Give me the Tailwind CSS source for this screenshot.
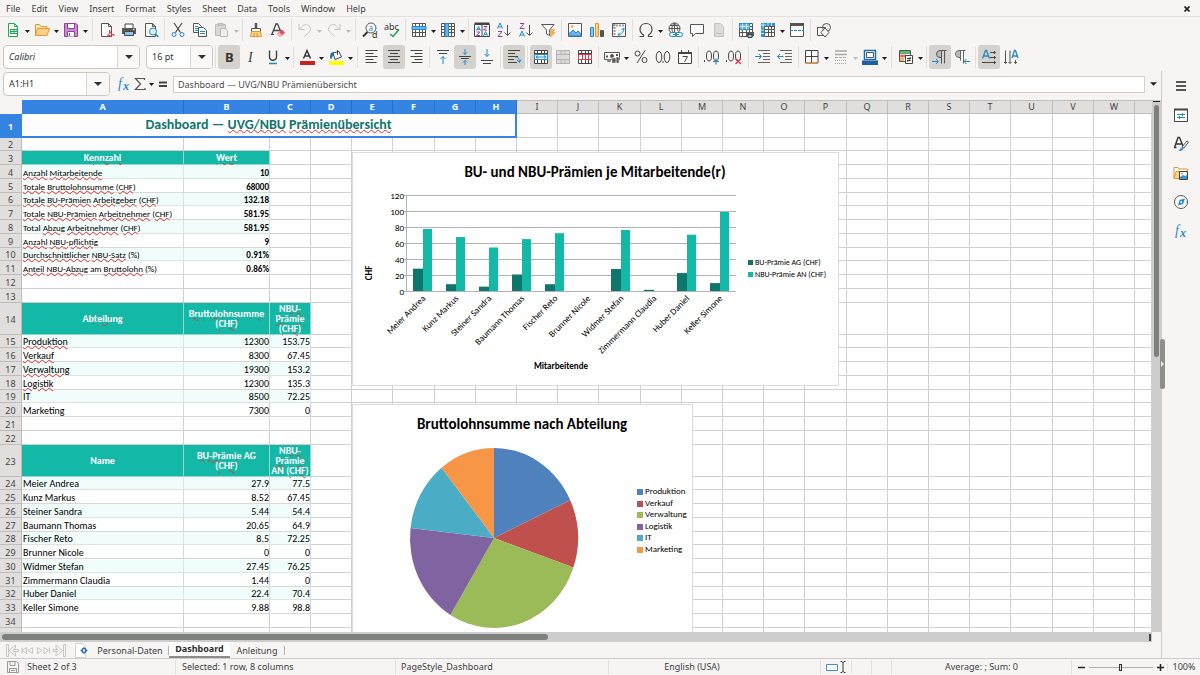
<!DOCTYPE html>
<html lang="en">
<head>
    <meta charset="UTF-8">
    <meta name="viewport" content="width=device-width, initial-scale=1.0">
    <title>Dashboard - Calc</title>
    <script src="https://cdn.jsdelivr.net/npm/@tailwindcss/browser@4"></script>
</head>
<body class="h-screen flex flex-col overflow-hidden bg-[#f6f5f4] font-['Noto_Sans',sans-serif] text-[9px] text-[#3d3d3d]">
    <!-- Menu bar -->
    <header class="flex items-center h-[17px] shrink-0 border-b border-[#e4e2e0] pt-px pl-1.5 pr-2">
        <nav id="menu" class="flex gap-[11px] flex-1"></nav>
        <button aria-label="Close document" class="p-0.5">
            <svg class="size-[6px]" viewBox="0 0 6 6" stroke="#222" stroke-width="1.6"><path d="M.5.5l5 5M5.5.5l-5 5"/></svg>
        </button>
    </header>

    <!-- Standard toolbar -->
    <div id="standardBar" class="flex items-center h-[26px] shrink-0 pl-0.5"></div>

    <!-- Formatting toolbar -->
    <div class="flex items-center h-[28px] shrink-0 pl-[3px]">
        <div class="flex w-[137px] h-[24px] rounded border border-[#cdc7c2] bg-white overflow-hidden">
            <input aria-label="Font name" value="Calibri" class="min-w-0 flex-1 pl-[5px] italic text-[#2e3436] outline-none">
            <button aria-label="Font list" class="w-[22px] border-l border-[#dcd8d5] bg-[#f9f8f7] flex items-center justify-center">
                <svg class="w-[8px] h-[4px]" viewBox="0 0 8 4"><path d="M0 0h8L4 4z" fill="#2e3436"/></svg>
            </button>
        </div>
        <div class="flex w-[67px] h-[24px] ml-1.5 rounded border border-[#cdc7c2] bg-white overflow-hidden">
            <input aria-label="Font size" value="16 pt" class="min-w-0 flex-1 pl-[5px] text-[#2e3436] outline-none">
            <button aria-label="Size list" class="w-[22px] border-l border-[#dcd8d5] bg-[#f9f8f7] flex items-center justify-center">
                <svg class="w-[8px] h-[4px]" viewBox="0 0 8 4"><path d="M0 0h8L4 4z" fill="#2e3436"/></svg>
            </button>
        </div>
        <div id="formatBar" class="flex items-center"></div>
    </div>

    <div class="flex flex-1 min-h-0">
        <main class="flex flex-col flex-1 min-w-0 border-r border-[#cfccca]">
            <!-- Formula bar -->
            <div class="flex items-center h-[29px] shrink-0 pl-[3px] pb-[3px]">
                <div class="flex w-[107px] h-[24px] rounded border border-[#cdc7c2] bg-white overflow-hidden">
                    <input aria-label="Name box" value="A1:H1" class="min-w-0 flex-1 pl-[5px] text-[#2e3436] outline-none">
                    <button aria-label="Named ranges" class="w-[23px] border-l border-[#dcd8d5] bg-[#f9f8f7] flex items-center justify-center">
                        <svg class="w-[8px] h-[4px]" viewBox="0 0 8 4"><path d="M0 0h8L4 4z" fill="#2e3436"/></svg>
                    </button>
                </div>
                <div id="formulaButtons" class="flex items-center pl-1.5 pr-0.5"></div>
                <input aria-label="Input line" value="Dashboard — UVG/NBU Prämienübersicht" class="flex-1 min-w-0 h-[17px] border border-[#d2cfcc] bg-white pl-1 text-[#4a4a4a] outline-none">
                <button aria-label="Expand formula bar" class="w-[16px] flex justify-center">
                    <svg class="w-[7px] h-[4px]" viewBox="0 0 8 4"><path d="M0 0h8L4 4z" fill="#222"/></svg>
                </button>
            </div>

            <!-- Sheet -->
            <div class="flex flex-1 min-h-0">
                <div class="relative flex-1 min-w-0 overflow-hidden bg-white">
                    <table class="w-full table-fixed border-separate border-spacing-0 font-[Carlito,Lato,sans-serif] text-black">
                        <colgroup id="cols"></colgroup>
                        <thead><tr id="colHeads"></tr></thead>
                        <tbody id="rows"></tbody>
                    </table>

                    <svg id="barChart" class="absolute left-[352px] top-[52px] w-[487px] h-[234px] bg-white border border-[#dcdcdc] font-[Carlito,Lato,sans-serif] text-[9px]" viewBox="353 153 485 232"></svg>
                    <svg id="pieChart" class="absolute left-[352px] top-[304px] w-[341px] h-[234px] bg-white border border-[#dcdcdc] font-[Carlito,Lato,sans-serif] text-[9px]" viewBox="353 405 339 232"></svg>
                </div>
                <div class="w-[9px] bg-[#cdcdcd] flex flex-col items-center">
                    <div class="w-[7px] h-px mt-px mb-[3px] bg-[#222]"></div>
                    <div class="w-[5px] h-[252px] rounded-full bg-[#7e807e]"></div>
                </div>
            </div>
            <div class="h-[10px] shrink-0 flex items-center justify-between mr-[9px] bg-[#cdcdcd] pl-0.5 pr-px">
                <div class="w-[546px] h-[6px] rounded-full bg-[#7e807e]"></div>
                <div class="w-[2px] h-[7px] bg-[#444]"></div>
            </div>

            <!-- Sheet tabs -->
            <div class="flex items-center h-[16px] shrink-0 pl-1.5">
                <svg class="w-[60px] h-[13px]" viewBox="0 0 60 13" fill="none" stroke="#c9c7c5">
                    <path d="M.5.5v12h2V.5zM3 6.5L9.500 1v3L7 6.500l2.500 2.500v3zM7.500 5.500h5v2h-5M20.500 3.500L16 6.500l4.500 3zM26.500 3.500L22 6.500l4.500 3zM16 3.500v6M31.500 3.500l4.500 3-4.500 3zM38 3.500l4.500 3-4.500 3zM43.500 3.500v6M57.500.5v12h2V.5zM56.500 6.500L50 1v3l2.500 2.500L50 9v3zM52 5.500h-5v2h5"/>
                </svg>
                <button aria-label="Add sheet" class="ml-2 w-[14px]">
                    <svg class="w-[14px] h-[15px]" viewBox="0 0 14 15" fill="none"><path d="M1.500.5h7l3 3v11h-10z" fill="#fff" stroke="#d5d3d1"/><circle cx="10" cy="7.500" r="2" fill="#fff" stroke="#2c6fb5" stroke-width="1.500"/><path d="M10 4v2M10 9v2M6.500 7.500h2M11.500 7.500h2" stroke="#2c6fb5"/></svg>
                </button>
                <button class="ml-1 w-[77px] border-r border-[#b5b3b1] leading-[9px] whitespace-nowrap">Personal-Daten</button>
                <button class="h-[16px] w-[61px] bg-white border-b-2 border-[#8b8c8b] font-bold text-[#2e2e2e]">Dashboard</button>
                <button class="w-[55px] border-r border-[#b5b3b1] leading-[9px]">Anleitung</button>
            </div>
        </main>

        <!-- Sidebar -->
        <aside class="relative w-[38px] shrink-0">
            <div id="sidebar" class="flex flex-col items-center"></div>
            <button aria-label="Hide sidebar" class="absolute -left-[2px] top-[268px] w-[5px] h-[50px] rounded-sm bg-[#8e8e8d] flex items-center justify-center">
                <svg class="w-[3px] h-[6px]" viewBox="0 0 3 6"><path d="M0 0l3 3-3 3z" fill="#eee"/></svg>
            </button>
        </aside>
    </div>

    <!-- Status bar -->
    <footer class="flex items-center h-[17px] shrink-0 border-t border-[#cfccca]">
        <div class="w-[26px] flex justify-center border-r border-[#e2e0de]">
            <svg class="size-[12px]" viewBox="0 0 12 12" fill="none" stroke="#9a9896"><path d="M.5.5h9l2 2v9H.5zM3 .5v4h5v-4M2.500 11V7.500h7V11M4 9.500h4"/></svg>
        </div>
        <div class="w-[150px] border-r border-[#e2e0de] pl-px leading-[14px]">Sheet 2 of 3</div>
        <div class="w-[220px] border-r border-[#e2e0de] pl-1.5 leading-[14px]">Selected: 1 row, 8 columns</div>
        <div class="flex-1 border-r border-[#e2e0de] pl-[5px] leading-[14px]">PageStyle_Dashboard</div>
        <div class="w-[212px] border-r border-[#e2e0de] pr-[45px] text-center leading-[14px]">English (USA)</div>
        <div class="w-[31px] flex justify-center border-r border-[#e2e0de]">
            <svg class="w-[20px] h-[12px]" viewBox="0 0 20 12" fill="none"><path d="M.5 3.500h11v6H.5z" fill="#fff" stroke="#3f92cf"/><path d="M14.500.5h1.500l1 1 1-1h1.500M17 1v10M14.500 11.500h1.500l1-1 1 1h1.500" stroke="#333"/></svg>
        </div>
        <div class="w-[20px] h-[14px] border-r border-[#e2e0de]"></div>
        <div class="w-[20px] h-[14px] border-r border-[#e2e0de]"></div>
        <div class="w-[180px] border-r border-[#e2e0de] text-center leading-[14px]">Average: ; Sum: 0</div>
        <div class="flex items-center gap-1 w-[96px] pl-1.5 border-r border-[#e2e0de]">
            <button aria-label="Zoom out"><svg class="size-[7px]" viewBox="0 0 7 7"><path d="M0 3.500h7" stroke="#222" stroke-width="1.500"/></svg></button>
            <input type="range" min="0" max="100" value="49" aria-label="Zoom" class="w-[64px] h-[7px] appearance-none bg-linear-to-b from-transparent from-45% via-[#8b8c8b] via-45% to-transparent to-60% [&::-webkit-slider-thumb]:appearance-none [&::-webkit-slider-thumb]:w-[3px] [&::-webkit-slider-thumb]:h-[7px] [&::-webkit-slider-thumb]:border [&::-webkit-slider-thumb]:border-[#333] [&::-webkit-slider-thumb]:bg-[#ddd]">
            <button aria-label="Zoom in"><svg class="size-[7px]" viewBox="0 0 7 7"><path d="M0 3.500h7M3.500 0v7" stroke="#222" stroke-width="1.500"/></svg></button>
        </div>
        <div class="w-[32px] text-center leading-[14px]">100%</div>
    </footer>

    <script>
        const grid = 'M1.500 1.500h13v13h-13zM1.500 4.500h13M1.500 7.500h13M1.500 10.500h13M4.500 1.500v13M8.500 1.500v13M11.500 1.500v13';

        // Icon bodies, drawn in a 16x16 box with no fill by default
        const icons = {
            new: '<path d="M3.500 1.500h6l3 3v10h-9z" fill="#fff" stroke="#18ab50"/><path d="M9.500 1.500v3h3" stroke="#18ab50"/><path d="M5 7h8v5H5z" fill="#18ab50"/><path d="M6 8.500h2.500M9.500 8.500H12M6 10.500h2.500M9.500 10.500H12" stroke="#fff"/>',
            open: '<path d="M1.500 13.500v-11h4l1.500 2h6v2" fill="#fbe3b8" stroke="#e8952a"/><path d="M1.500 13.500l2-7h12l-2.500 7z" fill="#fcd28c" stroke="#e8952a"/>',
            save: '<path d="M1.500 1.500h11.500l1.500 1.500v11.500h-13z" fill="#c78bd0" stroke="#93409f"/><path d="M4.500 1.500h7v5h-7zM4.500 14.500v-5h7v5" fill="#fff" stroke="#93409f"/><path d="M6.500 11v3" stroke="#93409f"/>',
            pdf: '<path d="M2.500 1.500h7l3 3v10h-10z" fill="#fff" stroke="#555"/><path d="M9.500 1.500v3h3" stroke="#555"/><path d="M7 15c3-2 4-4 3.500-7 .5 3 2 4.500 5 5-3-.5-6 .5-8.500 2z" stroke="#d93a4a"/>',
            print: '<path d="M4 6V2h8v4" fill="#fff" stroke="#444"/><path d="M1 6h14v6H1z" fill="#57585a"/><path d="M3.500 9.500h9v4h-9z" fill="#8cc4ea" stroke="#444"/><path d="M12 7.500h1.500" stroke="#fff"/>',
            preview: '<path d="M2.500 1.500h7l3 3v10h-10z" fill="#fff" stroke="#555"/><path d="M9.500 1.500v3h3" stroke="#555"/><circle cx="10" cy="9.500" r="3.500" fill="#d9edf9" stroke="#1e8bcd"/><path d="M12.500 12l3 3" stroke="#1e8bcd" stroke-width="1.500"/>',
            cut: '<path d="M4 1l6.500 9.500M12 1L5.500 10.500" stroke="#444" stroke-width="1.200"/><circle cx="4" cy="12.500" r="2" stroke="#1e8bcd"/><circle cx="12" cy="12.500" r="2" stroke="#1e8bcd"/>',
            copy: '<path d="M1.500 1.500h5l3 3v6h-8z" fill="#fff" stroke="#555"/><path d="M3 4.500h3M3 6.500h4M3 8.500h3" stroke="#1e8bcd"/><path d="M6.500 5.500h5l3 3v6h-8z" fill="#fff" stroke="#555"/><path d="M8 9.500h5M8 11.500h5" stroke="#1e8bcd"/>',
            paste: '<path d="M1.500 2.500h10v11h-10z" fill="#dad8d6" stroke="#bbb9b7"/><path d="M4 1.500h5v2H4z" fill="#ccc" stroke="#bbb9b7"/><path d="M6.500 6.500h5l2 2v6h-7z" fill="#eee" stroke="#bbb9b7"/>',
            clone: '<path d="M8 1v5" stroke="#555" stroke-width="2.500"/><path d="M3.500 6.500h9v3h-9z" fill="#fff" stroke="#555"/><path d="M3.500 9.500h9l1 5h-11z" fill="#fcd28c" stroke="#e8952a"/><path d="M6 11v3M9 11v3" stroke="#e8952a"/>',
            clear: '<path d="M2 12L6 2h1.500L11 10M3.500 8.500h6" stroke="#444" stroke-width="1.300"/><path d="M1 12.500h3" stroke="#444"/><path d="M7 11.500l5-4 3 3-4 4H9z" fill="#e5525d"/><path d="M7 11.500l2-1.500 3 3-1 1.500H9z" fill="#f7b5b9"/>',
            undo: '<path d="M2 2v5.500h5.500M2 7.500l4-4c3-2 7-.5 7.500 3.500 0 2-1.500 3.500-6 7.500" stroke="#c4c2c0"/>',
            redo: '<path d="M14 2v5.500H8.500M14 7.500l-4-4c-3-2-7-.5-7.500 3.500 0 2 1.500 3.500 6 7.500" stroke="#c4c2c0"/>',
            find: '<circle cx="9" cy="6" r="5" fill="#fff" stroke="#555"/><path d="M5.500 10L1 14.500" stroke="#333" stroke-width="2"/><text x="6.500" y="8.500" font-size="8" fill="#1e8bcd">a</text><text x="10" y="15.500" font-size="9" fill="#333">d</text>',
            spell: '<text x="0" y="7.500" font-size="9" fill="#333">abc</text><path d="M6 12l3 2.500L15 7.500" stroke="#18ab50" stroke-width="1.500"/>',
            row: `<path d="${grid}" fill="#fff" stroke="#555"/><path d="M1 4.500h14v3H1z" fill="#6ab4e8" stroke="#1e8bcd"/>`,
            column: `<path d="${grid}" fill="#fff" stroke="#555"/><path d="M5 1.500h3.500v13H5z" fill="#6ab4e8" stroke="#1e8bcd"/>`,
            sort: '<path d="M.5 2.500h15v12h-15z" fill="#fff" stroke="#444"/><path d="M.5 1.500h15" stroke="#444" stroke-width="2"/><path d="M8 2v13" stroke="#444"/><path d="M2.500 8.500l2-4 2 4M3 7.500h3M9.500 13.500l2-4 2 4M10.500 12.500h2.500" stroke="#1e8bcd"/><path d="M2.500 10h3.500L2.500 13.500H6M9.500 4.500H13L9.500 8H13" stroke="#a33ea1"/>',
            asc: '<path d="M1.500 6.500l2.500-5.500 2.500 5.500M2.500 5h3" stroke="#1e8bcd"/><path d="M2 9.500h4l-4 5h4.500" stroke="#a33ea1"/><path d="M11.500 3v10M8.500 10.500l3 3 3-3" stroke="#555"/>',
            desc: '<path d="M1.500 14.500L4 9l2.500 5.500M2.500 13h3" stroke="#1e8bcd"/><path d="M2 1.500h4l-4 5h4.500" stroke="#a33ea1"/><path d="M11.500 3v10M8.500 10.500l3 3 3-3" stroke="#555"/>',
            filter: '<path d="M1.500 2.500h12.500L9.500 8v5.500l-3-1.500V8z" fill="#fff" stroke="#555"/><path d="M11 7.500h3.500l-1.500 3h2L10 15.500l1-4H9.500z" fill="#f7b25a" stroke="#e8952a" stroke-width=".6"/>',
            image: '<path d="M1.500 1.500h13v13h-13z" fill="#fff" stroke="#555"/><path d="M2 12l4-4 3 3 2-2 3 3v2H2z" fill="#6ab4e8" stroke="#1e8bcd"/><circle cx="5" cy="4.500" r="1.500" fill="#f7b25a"/>',
            chart: '<path d="M1.500 5.500h3v9h-3z" fill="#8cc4ea" stroke="#1e8bcd"/><path d="M6.500 1.500h3v13h-3z" fill="#fcd28c" stroke="#e8952a"/><path d="M11.500 8.500h3v6h-3z" fill="#555" stroke="#555"/>',
            pivot: '<path d="M1.500 1.500h13v13h-13z" fill="#fff" stroke="#555"/><path d="M2 3.500h12M3.500 2v12" stroke="#999" stroke-width="2" stroke-dasharray="2 1"/><path d="M7 12.500c4 0 5.500-2 5.500-6M10.500 8l2-2 2 2M9 10.500l-2 2 2 2" stroke="#1e8bcd"/>',
            omega: '<path d="M1.500 14.500h4v-1.500C3 11.500 2 9.500 2 7.500 2 4 4.500 1.500 8 1.500s6 2.500 6 6c0 2-1 4-3.500 5.500v1.500h4" stroke="#444" stroke-width="1.200"/>',
            link: '<circle cx="7.500" cy="6.500" r="5.500" stroke="#555"/><path d="M2 6.500h11M3 3.500h9M7.500 1v11M7.500 1C4 4 4 9 7.500 12M7.500 1c3.500 3 3.500 6 3 8" stroke="#555"/><path d="M4.500 10.500h4v4h-4a2 2 0 010-4zM9.500 10.500h4a2 2 0 010 4h-4z" fill="#f6f5f4" stroke="#1e8bcd"/><path d="M6 12.500h6" stroke="#1e8bcd"/>',
            comment: '<path d="M1.500 2.500h13v9h-8l-3 3v-3h-2z" fill="#fff" stroke="#555"/>',
            header: '<path d="M3.500 1.500h6l3 3v10h-9z" fill="#dddbd9" stroke="#c4c2c0"/><path d="M5 11.500h6" stroke="#c4c2c0"/>',
            printArea: `<path d="${grid}" fill="#fff" stroke="#555"/><path d="M1.500 1.500h10v6h-10z" fill="#6ab4e8" stroke="#1e8bcd"/><path d="M1.500 4.500h10M4.500 1.500v6M8.500 1.500v6" stroke="#cfe6f6"/><path d="M8 10h8v4H8z" fill="#57585a"/><path d="M10 12.500h4v3h-4z" fill="#8cc4ea" stroke="#444"/>`,
            freeze: `<path d="${grid}" fill="#fff" stroke="#555"/><path d="M1 1h14v3H4.500v11H1z" fill="#2f93d6"/><path d="M8 0v4M11.500 0v4M1 8h3M1 11.500h3M3 0v6M0 3h6" stroke="#cfe6f6"/>`,
            split: '<path d="M1.500 1.500h13v13h-13z" fill="#fff" stroke="#555"/><path d="M1 2.500h14" stroke="#555" stroke-width="3"/><path d="M1 8.500h14" stroke="#1e8bcd" stroke-dasharray="3 1"/>',
            shapes: '<path d="M1.500 5.500h8v8h-8z" stroke="#555"/><circle cx="10.500" cy="5.500" r="4" stroke="#555"/><path d="M9 6l4 4.500-4 4.500-4-4.500z" fill="#f6f5f4" stroke="#555"/>',

            bold: '<text x="4" y="13" font-size="13" font-weight="700" fill="#333">B</text>',
            italic: '<text x="5" y="13" font-size="14" font-style="italic" font-family="Liberation Serif" fill="#444">I</text>',
            underline: '<path d="M4.500 1.500v6c0 5 7 5 7 0v-6" stroke="#444" stroke-width="1.400"/><path d="M4 14.500h8" stroke="#1e8bcd" stroke-width="1.500"/>',
            fontColor: '<path d="M4.500 9.500L8 1.500l3.500 8M6 7h4" stroke="#333" stroke-width="1.500"/><path d="M1 12h15v4H1z" fill="#c9211e"/>',
            fill: '<path d="M5 4l6-1.500L13.500 8 7 10.500z" fill="#fff" stroke="#444"/><path d="M9.500 1v5" stroke="#444"/><path d="M2 9c0-4 1-6 4-6v3C4.500 7 4 8 3.500 10z" fill="#1e6db0"/><path d="M1 12h15v4H1z" fill="#ff0"/>',
            left: '<path d="M1.500 1.500h12M1.500 4.500h8M1.500 7.500h12M1.500 10.500h8M1.500 13.500h11" stroke="#444"/>',
            center: '<path d="M2 1.500h12M4 4.500h8M2 7.500h12M4 10.500h8M2 13.500h12" stroke="#444"/>',
            right: '<path d="M2.500 1.500h12M6.500 4.500h8M2.500 7.500h12M6.500 10.500h8M3.500 13.500h11" stroke="#444"/>',
            top: '<path d="M2 1.500h12M4 4.500h8" stroke="#444"/><path d="M8 15V7.500M5.500 10L8 7.500l2.500 2.500" stroke="#1e8bcd"/>',
            middle: '<path d="M2 7.500h12M4 9.500h8" stroke="#444"/><path d="M8 0v5.500M6 3.500l2 2 2-2M8 16v-4.500M6 13.500l2-2 2 2" stroke="#1e8bcd"/>',
            bottom: '<path d="M2 11.500h12M4 14.500h8" stroke="#444"/><path d="M8 0v7.500M5.500 5L8 7.500 10.500 5" stroke="#1e8bcd"/>',
            wrap: '<path d="M2 1.500h12M2 4.500h7M2 7.500h10M2 10.500h6M2 13.500h9" stroke="#444"/><path d="M9 8c3 0 4 1 4.500 5M11 11l2.500 2.500L15 10.500" stroke="#1e8bcd"/>',
            merge: `<path d="${grid}" fill="#fff" stroke="#444"/><path d="M1.500 5.500h13v5h-13z" fill="#fff" stroke="#1e8bcd"/><path d="M3 8h10M5 6.500L3 8l2 1.500M11 6.500L13 8l-2 1.500" stroke="#1e8bcd"/>`,
            mergeCells: '<path d="M1.500 1.500h13v13h-13zM1.500 5.500h13M1.500 10.500h13M6 1.500v4M10 1.500v4M6 10.500v4M10 10.500v4" fill="#dddbd9" stroke="#b5b3b1"/>',
            unmerge: `<path d="${grid}" fill="#fff" stroke="#444"/><path d="M1.500 5.500h13v5h-13zM5.500 5.500v5M8.500 5.500v5M11.500 5.500v5" fill="#fff" stroke="#d93a4a"/>`,
            currency: '<path d="M.5 3.500h15v7h-15z" fill="#fff" stroke="#555"/><circle cx="8" cy="7" r="2" fill="#555"/><path d="M2 7.500h2M12 6h2" stroke="#555" stroke-width="2"/><path d="M3 13h4v-2H3zM8 14h4V9H8zM12 14h3V8h-3z" fill="#555" stroke="#f6f5f4" stroke-width=".5"/>',
            percent: '<circle cx="4.500" cy="4.500" r="2.500" stroke="#444"/><circle cx="11.500" cy="11" r="2.500" stroke="#444"/><path d="M12 1.500L4 14" stroke="#444"/>',
            number: '<ellipse cx="4" cy="8" rx="2.800" ry="5.500" stroke="#444"/><ellipse cx="12" cy="8" rx="2.800" ry="5.500" stroke="#444"/><path d="M8 12v2" stroke="#444"/>',
            date: '<path d="M1.500 3.500h13v11h-13z" fill="#fff" stroke="#444"/><path d="M1 4h14" stroke="#444" stroke-width="2"/><path d="M4.500 1v3M11.500 1v3M5.500 7.500h5L7.500 13" stroke="#444"/>',
            addDecimal: '<ellipse cx="5" cy="7" rx="2.500" ry="5" stroke="#444"/><ellipse cx="12" cy="7" rx="2.500" ry="5" stroke="#444"/><path d="M.5 11v2" stroke="#444"/><path d="M12 9.500v6M9 12.500h6" stroke="#1e8bcd" stroke-width="1.200"/>',
            delDecimal: '<ellipse cx="5" cy="7" rx="2.500" ry="5" stroke="#444"/><ellipse cx="12" cy="7" rx="2.500" ry="5" stroke="#444"/><path d="M.5 11v2" stroke="#444"/><path d="M9.500 9.500l5.500 5.500M15 9.500L9.500 15" stroke="#e5323e" stroke-width="1.200"/>',
            indent: '<path d="M3 1.500h12M8 4.500h7M8 7.500h7M8 10.500h7M3 13.500h12" stroke="#666"/><path d="M0 7.500h6M4 5l2.500 2.500L4 10" stroke="#1e8bcd"/>',
            outdent: '<path d="M3 1.500h12M8 4.500h7M8 7.500h7M8 10.500h7M3 13.500h12" stroke="#666"/><path d="M.5 7.500h6M3 5L.5 7.500 3 10" stroke="#1e8bcd"/>',
            borders: '<path d="M1.500 1.500h12.500v12.500H1.500zM7.500 1.500v12.500M1.500 7.500H14" fill="#fff" stroke="#444"/><path d="M1.500 14h12.500" stroke="#e8952a"/>',
            borderStyle: '<path d="M2 2h12M2 5.500h12" stroke="#aaa8a6" stroke-width="1.500"/><path d="M2 8.500h12" stroke="#aaa8a6" stroke-dasharray="3 1"/><path d="M2 11.500h12M2 14.500h12" stroke="#aaa8a6" stroke-dasharray="1 1"/>',
            borderColor: '<path d="M2.500 1.500h11v9h-11z" fill="#fff" stroke="#1e6db0" stroke-width="1.500"/><path d="M4.500 3.500h7v5h-7z" stroke="#555"/><path d="M0 11.500h16V16H0z" fill="#1f5fa0"/>',
            conditional: '<path d="M1.500 1.500h11v11h-11z" fill="#fff" stroke="#555"/><path d="M2 2h10v3H2z" fill="#58b979"/><path d="M2 5.500h6v3H2z" fill="#ee6b6b"/><path d="M2 9h4v3H2z" fill="#f7b25a"/><path d="M7.500 6.500h7v8h-7z" fill="#fff" stroke="#444"/><path d="M9 9.500h4M9 11.500h4M12.500 8l-3 5" stroke="#444"/>',
            ltr: '<path d="M8 2a3 3 0 000 6h1V2z" fill="#bbb"/><path d="M14.500 1.500H8a3 3 0 000 7h1M9.500 1.500v13M12.500 1.500v13" stroke="#555"/><path d="M0 12.500h6M4 10l2.500 2.500L4 15" stroke="#1e8bcd"/>',
            rtl: '<path d="M5 2a3 3 0 000 6h1V2z" fill="#bbb"/><path d="M11.500 1.500H5a3 3 0 000 7h1M6.500 1.500v10M9.500 1.500v13" stroke="#666"/><path d="M16 12.500h-6M12.500 10L10 12.500l2.500 2.500" stroke="#1e8bcd"/>',
            textLtr: '<path d="M1.500 9.500l3-8h1l3 8M3 7h4.500" stroke="#1e8bcd" stroke-width="1.300"/><path d="M9 3.500h5.500M13 2l1.500 1.500L13 5M9 8.500h5.500M13 7l1.500 1.500L13 10M1 13.500h13.500M13 12l1.500 1.500L13 15" stroke="#444"/>',
            textTtb: '<path d="M9 9l2.500-7.500h1L15 9M9.500 7H14" stroke="#1e8bcd" stroke-width="1.300"/><path d="M2.500 1.500v13M1 13l1.500 1.500L4 13M7 1.500v13M5.500 13L7 14.500 8.500 13M12.500 11v3.500M11 13l1.500 1.500L14 13" stroke="#555"/>',

            fx: '<text x="2" y="12" font-size="14" font-style="italic" font-family="Liberation Serif" fill="#1e8bcd">f</text><text x="7" y="14" font-size="12" font-style="italic" font-weight="700" font-family="Liberation Serif" fill="#1e8bcd">x</text>',
            sum: '<path d="M12.500 4V2.500h-9L8.500 8l-5 5.500h9.500V12" stroke="#555" stroke-width="1.200"/>',
            equals: '<path d="M4 6.500h8M4 10h8" stroke="#444" stroke-width="1.800"/>',

            settings: '<path d="M3 4h10M3 8h10M3 12h10" stroke="#222" stroke-width="1.500"/>',
            properties: '<path d="M1.500 2.500h13v12h-13z" fill="#fff" stroke="#444"/><path d="M1 2.500h14" stroke="#444" stroke-width="2"/><path d="M4 7.500h8M4 10.500h8M9.500 6v3M6.500 9v3" stroke="#1e8bcd"/>',
            styles: '<path d="M1.500 11.500L5 1.500h1.500L10 10M3 8h5.500M1 11.500h2.500" stroke="#333" stroke-width="1.400"/><path d="M9 11l5-6 1.500 1-4.500 6z" fill="#fff" stroke="#555"/><path d="M5 14.500c2 0 2-3 4-3l1.500 1c0 2-3 3-5.500 2z" fill="#3f92cf"/>',
            gallery: '<path d="M1 13.500V2.500h4l1 1.500h8.500v2" fill="#fff" stroke="#e8952a"/><path d="M1 13.500l2-7h6v7z" fill="#fcd28c" stroke="#e8952a"/><path d="M6.500 6.500h8v8h-8z" fill="#fff" stroke="#444"/><path d="M7 12l3-2 2 1 2-1v4H7z" fill="#3f92cf"/><circle cx="9" cy="8.500" r="1" fill="#e8952a"/>',
            navigator: '<circle cx="8" cy="8" r="6.500" fill="#fff" stroke="#555"/><path d="M12 4.500L10 10l-5 1.500L6.500 6z" fill="#1e8bcd"/><circle cx="8.200" cy="8" r="1" fill="#fff"/>'
        };

        const icon = name => `<svg class="size-[16px] overflow-visible" viewBox="0 0 16 16" fill="none">${icons[name]}</svg>`;

        // Toolbar items: 'icon', '*icon' (pressed), 'v' (drop-down arrow), 'd' (disabled arrow), '|' and '||' (separators)
        function toolbar(id, items) {
            document.getElementById(id).innerHTML = items.split(' ').map(item => {
                if (item === '|') return '<span class="w-[5px] h-[22px] flex justify-center"><i class="w-px bg-[#e2dfdc]"></i></span>';
                if (item === '||') return '<span class="w-[7px] h-[22px] flex justify-center"><i class="w-px bg-[#e2dfdc]"></i></span>';
                if (item === 'v' || item === 'd') {
                    return `<button aria-label="More options" class="w-[7px] h-[22px] flex items-center justify-center"><svg class="w-[5px] h-[3px] mt-[3px]" viewBox="0 0 5 3"><path d="M0 0h5L2.500 3z" fill="${item === 'v' ? '#1c1c1c' : '#bbb'}"/></svg></button>`;
                }
                const pressed = item[0] === '*';
                const name = item.replace('*', '');
                return `<button aria-label="${name}" class="w-[22px] h-[24px] rounded-[3px] flex items-center justify-center ${pressed ? 'bg-[#d5d1cd]' : ''}">${icon(name)}</button>`;
            }).join('');
        }

        toolbar('standardBar', 'new v open v save v || pdf print preview | cut copy paste d | clone clear | undo d redo d || find spell | row v column v | sort asc desc filter | image chart pivot | omega v link comment header | printArea freeze v split | shapes');
        toolbar('formatBar', '| *bold italic underline v | fontColor v fill v || left *center right | top *middle bottom | *wrap | *merge mergeCells unmerge | currency v percent number date | addDecimal delDecimal || indent outdent | borders v borderStyle d borderColor v || conditional v | *ltr rtl | *textLtr textTtb');

        document.getElementById('formulaButtons').innerHTML = ['fx', 'sum', 'v', 'equals'].map(name => name === 'v'
            ? '<button aria-label="Functions" class="w-[7px] flex justify-center"><svg class="w-[5px] h-[3px]" viewBox="0 0 5 3"><path d="M0 0h5L2.500 3z" fill="#1c1c1c"/></svg></button>'
            : `<button aria-label="${name}" class="w-[16px] flex justify-center">${icon(name)}</button>`).join('');

        document.getElementById('sidebar').innerHTML = ['settings', 'properties', 'styles', 'gallery', 'navigator', 'fx'].map(name =>
            `<button aria-label="${name}" class="w-[24px] h-[29px] flex items-center justify-center">${icon(name)}</button>`).join('');

        document.getElementById('menu').innerHTML = ['File', 'Edit', 'View', 'Insert', 'Format', 'Styles', 'Sheet', 'Data', 'Tools', 'Window', 'Help']
            .map(name => `<button>${name}</button>`).join('');

        // Sheet data; words between tildes are marked by the spell checker
        const letters = 'ABCDEFGHIJKLMNOPQRSTUVW'.split('');
        const cells = {
            3: ['~Kennzahl~', '~Wert~'],
            4: ['~Anzahl~ ~Mitarbeitende~', '10'],
            5: ['~Totale~ ~Bruttolohnsumme~ (~CHF~)', '68000'],
            6: ['~Totale~ ~BU-Prämien~ ~Arbeitgeber~ (~CHF~)', '132.18'],
            7: ['~Totale~ ~NBU-Prämien~ ~Arbeitnehmer~ (~CHF~)', '581.95'],
            8: ['Total ~Abzug~ ~Arbeitnehmer~ (~CHF~)', '581.95'],
            9: ['~Anzahl~ ~NBU-pflichtig~', '9'],
            10: ['~Durchschnittlicher~ ~NBU-Satz~ (%)', '0.91%'],
            11: ['~Anteil~ ~NBU-Abzug~ am ~Bruttolohn~ (%)', '0.86%'],
            14: ['~Abteilung~', '~Bruttolohnsumme~<br>(~CHF~)', '~NBU-~<br>~Prämie~<br>(~CHF~)'],
            15: ['~Produktion~', '12300', '153.75'],
            16: ['~Verkauf~', '8300', '67.45'],
            17: ['~Verwaltung~', '19300', '153.2'],
            18: ['~Logistik~', '12300', '135.3'],
            19: ['IT', '8500', '72.25'],
            20: ['Marketing', '7300', '0'],
            23: ['Name', '~BU-Prämie~ AG<br>(~CHF~)', '~NBU-~<br>~Prämie~<br>AN (~CHF~)'],
            24: ['Meier Andrea', '27.9', '77.5'],
            25: ['Kunz Markus', '8.52', '67.45'],
            26: ['Steiner Sandra', '5.44', '54.4'],
            27: ['Baumann Thomas', '20.65', '64.9'],
            28: ['Fischer Reto', '8.5', '72.25'],
            29: ['Brunner Nicole', '0', '0'],
            30: ['Widmer Stefan', '27.45', '76.25'],
            31: ['Zimmermann Claudia', '1.44', '0'],
            32: ['Huber Daniel', '22.4', '70.4'],
            33: ['Keller Simone', '9.88', '98.8']
        };
        const headRows = [3, 14, 23];
        const tinted = [4, 6, 8, 10, 15, 17, 19, 24, 26, 28, 30, 32];
        const shortRows = [2, 6, 10, 15, 19, 24, 28, 32];
        const mark = text => text.replace(/~([^~]+)~/g, '<span class="underline decoration-wavy decoration-[#e0342c] decoration-1 underline-offset-0">$1</span>');

        document.getElementById('cols').innerHTML = '<col class="w-[22px]"><col class="w-[162px]"><col class="w-[86px]"><col class="w-[41px]">'
            + '<col class="w-[41px]"><col class="w-[41px]"><col class="w-[42px]"><col class="w-[41px]"><col class="w-[41px]">'.repeat(4) + '<col>';

        document.getElementById('colHeads').innerHTML = '<td class="h-[14px] bg-[#f6f5f4]"></td>' + letters.map((letter, i) =>
            `<th class="h-[14px] p-0 text-[9px] leading-[12px] font-['Noto_Sans',sans-serif] border-r ${i < 8 ? 'bg-[#3584e4] text-white border-[#2a70c8] font-bold' : 'bg-[#e1dfde] text-[#444] border-[#bfbdbb] font-normal border-t border-b'}">${letter}</th>`).join('')
            + '<th class="bg-[#e1dfde] border-t border-b border-[#bfbdbb]"></th>';

        let html = '';
        for (let n = 1; n <= 35; n++) {
            const height = n === 1 ? 'h-[24px]' : n === 14 || n === 23 ? 'h-[32px]' : shortRows.includes(n) ? 'h-[13px]' : 'h-[14px]';
            html += `<tr><th class="${height} p-0 pt-[2px] font-['Noto_Sans',sans-serif] text-[9px] leading-[10px] border-r border-b ${n === 1 ? 'bg-[#3584e4] text-white border-[#3584e4] font-bold' : 'bg-[#e1dfde] text-[#444] border-[#bfbdbb] font-normal'}">${n}</th>`;
            let start = 0;
            if (n === 1) {
                html += '<td colspan="8" class="p-0 text-center text-[14px] leading-[20px] font-bold text-[#0f766e] border-b-2 border-r-2 border-[#3584e4]">Dashboard — ' + mark('~UVG/NBU~ ~Prämienübersicht~') + '</td>';
                start = 8;
            }
            for (let c = start; c < 24; c++) {
                const text = cells[n] && cells[n][c];
                let style = 'p-0 border-[#d0d0d0]';
                if (text && headRows.includes(n)) {
                    style = 'p-0 bg-[#14b8a6] text-white text-[10px] leading-[10px] font-bold text-center align-middle border-[#8fd9d0]';
                } else if (text) {
                    style = 'p-0 pt-[2px] align-bottom leading-[10px] ' + (n < 12 ? 'text-[9px] ' : 'text-[10px] ')
                        + (c > 0 ? 'text-right ' : 'pl-px ')
                        + (c > 0 && n < 12 ? 'font-bold ' : '')
                        + (tinted.includes(n) ? 'bg-[#f0fdfa] border-[#dbe6e4]' : 'border-[#d8d8d8]');
                }
                html += `<td class="whitespace-nowrap border-r border-b ${style}">${text ? mark(text) : ''}</td>`;
            }
            html += '</tr>';
        }
        document.getElementById('rows').innerHTML = html;

        // Bar chart
        const people = [24, 25, 26, 27, 28, 29, 30, 31, 32, 33].map(n => cells[n]);
        const step = 33, baseY = 291, perUnit = 0.8;
        let bars = '<text x="595" y="177" text-anchor="middle" font-size="15" font-weight="700">BU- und NBU-Prämien je Mitarbeitende(r)</text>';
        for (let v = 0; v <= 120; v += 20) {
            const y = baseY - v * perUnit + 0.5;
            bars += `<path d="M404 ${y}H736" stroke="#b3b3b3"/><text x="404" y="${y + 3}" text-anchor="end">${v}</text>`;
        }
        bars += '<path d="M406.500 195V292" stroke="#b3b3b3"/>';
        people.forEach(([name, ag, an], i) => {
            const x = 423 + i * step;
            bars += `<rect x="${x - 10}" y="${baseY - ag * perUnit}" width="10" height="${ag * perUnit}" fill="#0f766e"/>`
                + `<rect x="${x}" y="${baseY - an * perUnit}" width="9" height="${an * perUnit}" fill="#14b8a6"/>`
                + `<text transform="translate(${x + 3} 299) rotate(-45)" text-anchor="end">${name}</text>`;
        });
        bars += '<text transform="translate(372 273) rotate(-90)" text-anchor="middle" font-weight="700">CHF</text>'
            + '<text x="561" y="369" text-anchor="middle" font-weight="700">Mitarbeitende</text>'
            + '<path d="M748 260h5v5h-5z" fill="#0f766e"/><text x="755" y="265" font-size="8">BU-Prämie AG (CHF)</text>'
            + '<path d="M748 272h5v5h-5z" fill="#14b8a6"/><text x="755" y="277" font-size="8">NBU-Prämie AN (CHF)</text>';
        document.getElementById('barChart').innerHTML = bars;

        // Pie chart
        const colors = ['#4f81bd', '#c0504d', '#9bbb59', '#8064a2', '#4bacc6', '#f79646'];
        const parts = [15, 16, 17, 18, 19, 20].map(n => cells[n]);
        const total = parts.reduce((sum, part) => sum + Number(part[1]), 0);
        let pie = '<text x="522" y="429" text-anchor="middle" font-size="15" font-weight="700">Bruttolohnsumme nach Abteilung</text>';
        let angle = 0;
        const point = a => `${494 + 84 * Math.sin(a)} ${538 - 90 * Math.cos(a)}`;
        parts.forEach((part, i) => {
            const next = angle + part[1] / total * 2 * Math.PI;
            pie += `<path d="M494 538L${point(angle)}A84 90 0 0 1 ${point(next)}z" fill="${colors[i]}"/>`
                + `<rect x="637" y="${489 + Math.round(i * 11.6)}" width="6" height="6" fill="${colors[i]}"/>`
                + `<text x="645" y="${494 + Math.round(i * 11.6)}">${part[0].replace(/~/g, '')}</text>`;
            angle = next;
        });
        document.getElementById('pieChart').innerHTML = pie;
    </script>
</body>
</html>
